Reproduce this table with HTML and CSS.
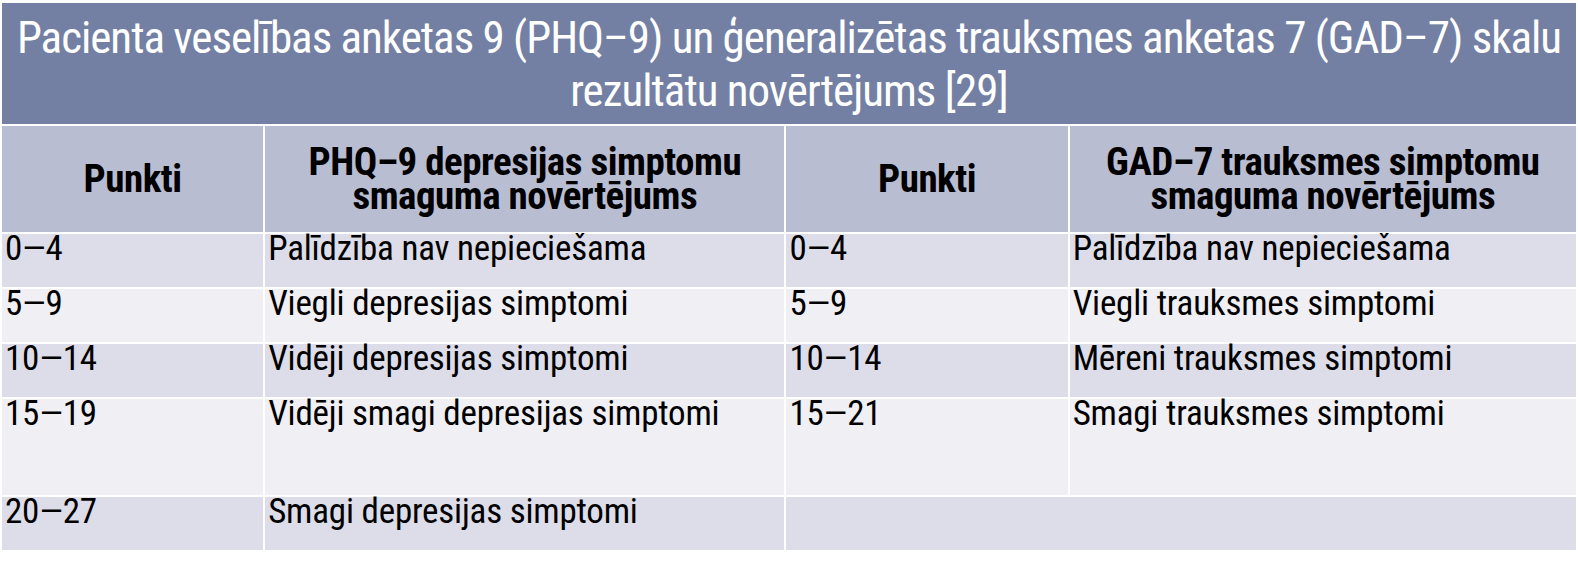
FILE: index.html
```html
<!DOCTYPE html>
<html lang="lv">
<head>
<meta charset="utf-8">
<title>PHQ-9 un GAD-7</title>
<link rel="stylesheet" href="styles.css">
</head>
<body>
<table class="scores">
  <colgroup>
    <col class="c1"><col class="c2"><col class="c3"><col class="c4">
  </colgroup>
  <tr class="title-row">
    <th colspan="4" class="title">Pacienta veselības anketas 9 (PHQ–9) un ģeneralizētas trauksmes anketas 7 (GAD–7) skalu rezultātu novērtējums [29]</th>
  </tr>
  <tr class="head-row">
    <th class="head">Punkti</th>
    <th class="head">PHQ–9 depresijas simptomu smaguma novērtējums</th>
    <th class="head">Punkti</th>
    <th class="head">GAD–7 trauksmes simptomu smaguma novērtējums</th>
  </tr>
  <tr class="row odd">
    <td>0—4</td><td>Palīdzība nav nepieciešama</td><td>0—4</td><td>Palīdzība nav nepieciešama</td>
  </tr>
  <tr class="row even">
    <td>5—9</td><td>Viegli depresijas simptomi</td><td>5—9</td><td>Viegli trauksmes simptomi</td>
  </tr>
  <tr class="row odd">
    <td>10—14</td><td>Vidēji depresijas simptomi</td><td>10—14</td><td>Mēreni trauksmes simptomi</td>
  </tr>
  <tr class="row even tall">
    <td>15—19</td><td>Vidēji smagi depresijas simptomi</td><td>15—21</td><td>Smagi trauksmes simptomi</td>
  </tr>
  <tr class="row odd">
    <td>20—27</td><td>Smagi depresijas simptomi</td><td colspan="2"></td>
  </tr>
</table>
</body>
</html>
```

FILE: styles.css
```css
html, body {
  margin: 0;
  padding: 0;
  background: #ffffff;
}
body {
  padding-top: 1px;
  font-family: "Roboto Condensed", "Roboto", "Liberation Sans", sans-serif;
  font-stretch: 75%;
  color: #000000;
}
.scores {
  width: 1578px;
  table-layout: fixed;
  border-collapse: separate;
  border-spacing: 2px;
  background: #ffffff;
}
.c1 { width: 261px; }
.c2 { width: 519px; }
.c3 { width: 281px; }
.c4 { width: 506px; }

.scores th, .scores td {
  padding: 0;
}
.title-row { height: 121px; }
.title {
  background: #7480a3;
  color: #ffffff;
  font-weight: normal;
  font-size: 45px;
  letter-spacing: -1px;
  line-height: 53px;
  text-align: center;
  vertical-align: middle;
  padding-bottom: 10px;
}
.head-row { height: 106px; }
.head {
  background: #b9bdd2;
  font-weight: bold;
  font-size: 39px;
  letter-spacing: -0.5px;
  line-height: 34px;
  text-align: center;
  vertical-align: middle;
  padding: 0 16px;
}
.row { height: 53px; }
.row.tall { height: 96px; }
.row td {
  font-size: 35px;
  letter-spacing: -0.2px;
  line-height: 30px;
  vertical-align: top;
  padding: 0 3px;
}
.row.odd td { background: #dcdde8; }
.row.even td { background: #efeff4; }
```
